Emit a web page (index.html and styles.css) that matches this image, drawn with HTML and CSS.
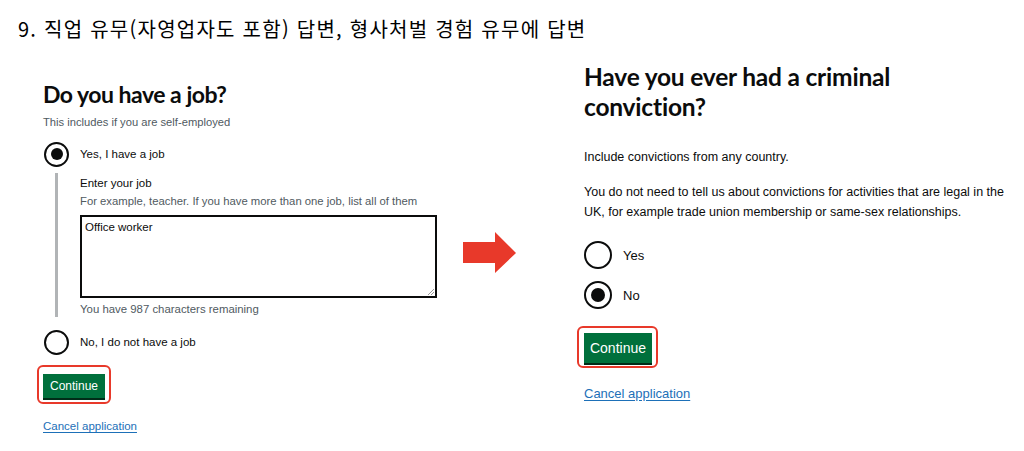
FILE: index.html
```html
<!DOCTYPE html>
<html lang="ko">
<head>
<meta charset="utf-8">
<title>직업 유무 / 형사처벌</title>
<link rel="stylesheet" href="styles.css">
</head>
<body>
<div class="page">
  <h1 class="title">9. 직업 유무(자영업자도 포함) 답변, 형사처벌 경험 유무에 답변</h1>
  <div class="row">
    <section class="panel left">
      <h2 class="q-left">Do you have a job?</h2>
      <p class="hint-left">This includes if you are self-employed</p>
      <div class="radio small radio-yes">
        <span class="dot checked"></span>
        <span class="label">Yes, I have a job</span>
      </div>
      <div class="conditional">
        <div class="field-label">Enter your job</div>
        <div class="field-hint">For example, teacher. If you have more than one job, list all of them</div>
        <div class="textarea">Office worker<span class="grip"></span></div>
        <div class="count">You have 987 characters remaining</div>
      </div>
      <div class="radio small radio-no">
        <span class="dot"></span>
        <span class="label">No, I do not have a job</span>
      </div>
      <div class="highlight small-hl"><span class="btn btn-sm">Continue</span></div>
      <a class="cancel cancel-sm" href="#">Cancel application</a>
    </section>

    <div class="arrow">
      <svg width="54" height="42" viewBox="0 0 54 42"><polygon points="0,10 32,10 32,0 53,21 32,41 32,31 0,31" fill="#e8392a"/></svg>
    </div>

    <section class="panel right">
      <h2 class="q-right">Have you ever had a criminal conviction?</h2>
      <p class="body-r first">Include convictions from any country.</p>
      <p class="body-r">You do not need to tell us about convictions for activities that are legal in the UK, for example trade union membership or same-sex relationships.</p>
      <div class="radios-r">
        <div class="radio large">
          <span class="dot"></span>
          <span class="label">Yes</span>
        </div>
        <div class="radio large">
          <span class="dot checked"></span>
          <span class="label">No</span>
        </div>
      </div>
      <div class="highlight large-hl"><span class="btn btn-lg">Continue</span></div>
      <a class="cancel cancel-lg" href="#">Cancel application</a>
    </section>
  </div>
</div>
</body>
</html>
```

FILE: styles.css
```css
* { box-sizing: border-box; }
html, body { margin: 0; padding: 0; background: #fff; }
body {
  font-family: "Liberation Sans", Arial, sans-serif;
  color: #0b0c0c;
  width: 1024px;
  height: 451px;
  overflow: hidden;
}
.page { padding: 16px 0 0 18px; }
.title {
  margin: 0;
  font-family: "Noto Sans CJK KR", "Noto Sans", sans-serif;
  font-weight: 400;
  font-size: 20px;
  line-height: 26px;
  color: #000;
  letter-spacing: 1.25px;
}
.row { display: flex; align-items: flex-start; }

.panel.left { width: 420px; margin-left: 25px; padding-top: 38px; }
.q-left {
  margin: 0;
  font-family: Lato, "Liberation Sans", sans-serif;
  font-size: 23px;
  line-height: 28px;
  font-weight: 700;
  letter-spacing: -0.5px;
}
.hint-left {
  margin: 7px 0 0;
  font-size: 11.2px;
  line-height: 14px;
  color: #505a5f;
}
.radio { display: flex; align-items: center; }
.dot {
  flex: none;
  border: 2px solid #0b0c0c;
  border-radius: 50%;
  display: flex; align-items: center; justify-content: center;
  background: #fff;
}
.dot.checked::after {
  content: "";
  border-radius: 50%;
  background: #0b0c0c;
}
.radio.small { height: 26px; margin-left: 1px; }
.radio-yes { margin-top: 12px; }
.radio-no { margin-top: 12px; }
.radio.small .dot { width: 25px; height: 25px; }
.radio.small .dot.checked::after { width: 12px; height: 12px; }
.radio.small .label { margin-left: 11px; font-size: 11.5px; }

.conditional {
  margin: 6px 0 0 12px;
  border-left: 3px solid #b1b4b6;
  padding: 2px 0 1px 22px;
}
.field-label { font-size: 11.5px; line-height: 16px; }
.field-hint { font-size: 11.3px; line-height: 14px; color: #505a5f; margin-top: 3px; }
.textarea {
  position: relative;
  margin-top: 7px;
  width: 357px;
  height: 83px;
  border: 2px solid #0b0c0c;
  padding: 3px 3px;
  font-size: 11.5px;
  line-height: 14px;
}
.grip {
  position: absolute; right: 1px; bottom: 1px;
  width: 6px; height: 6px;
  background: linear-gradient(135deg, transparent 45%, #999 45%, #999 55%, transparent 55%, transparent 70%, #999 70%, #999 80%, transparent 80%);
}
.count { font-size: 11.4px; line-height: 14px; color: #505a5f; margin-top: 4px; }

.highlight {
  display: inline-block;
  border: 2px solid #e8392a;
  border-radius: 6px;
}
.small-hl { margin: 10px 0 0 -6px; padding: 7px 4px 4px 4px; }
.btn {
  display: inline-block;
  background: #00703c;
  color: #fff;
  box-shadow: 0 2px 0 #002d18;
}
.btn-sm { width: 62px; height: 24px; font-size: 12px; line-height: 24px; text-align: center; }
.cancel { display: block; color: #1d70b8; text-decoration: underline; text-underline-offset: 2px; }
.cancel-sm { font-size: 11.5px; margin-top: 16px; }

.arrow { margin-top: 190px; width: 121px; }
.arrow svg { display: block; }

.panel.right { padding-top: 20px; }
.q-right {
  margin: 0;
  width: 340px;
  font-family: Lato, "Liberation Sans", sans-serif;
  font-size: 24.5px;
  line-height: 30px;
  font-weight: 700;
  letter-spacing: -0.2px;
}
.body-r { margin: 0; font-size: 12.5px; line-height: 20px; width: 430px; }
.body-r.first { margin-top: 25px; }
.body-r + .body-r { margin-top: 15px; }
.radios-r { margin-top: 19px; display: flex; flex-direction: column; gap: 12px; }
.radio.large .dot { width: 28px; height: 28px; }
.radio.large .dot.checked::after { width: 14px; height: 14px; }
.radio.large .label { margin-left: 11px; font-size: 13px; }
.large-hl { margin: 17px 0 0 -7px; padding: 5px 4px 3px 5px; }
.btn-lg { width: 68px; height: 30px; font-size: 14px; line-height: 30px; text-align: center; }
.cancel-lg { font-size: 13px; margin-top: 18px; }
```
